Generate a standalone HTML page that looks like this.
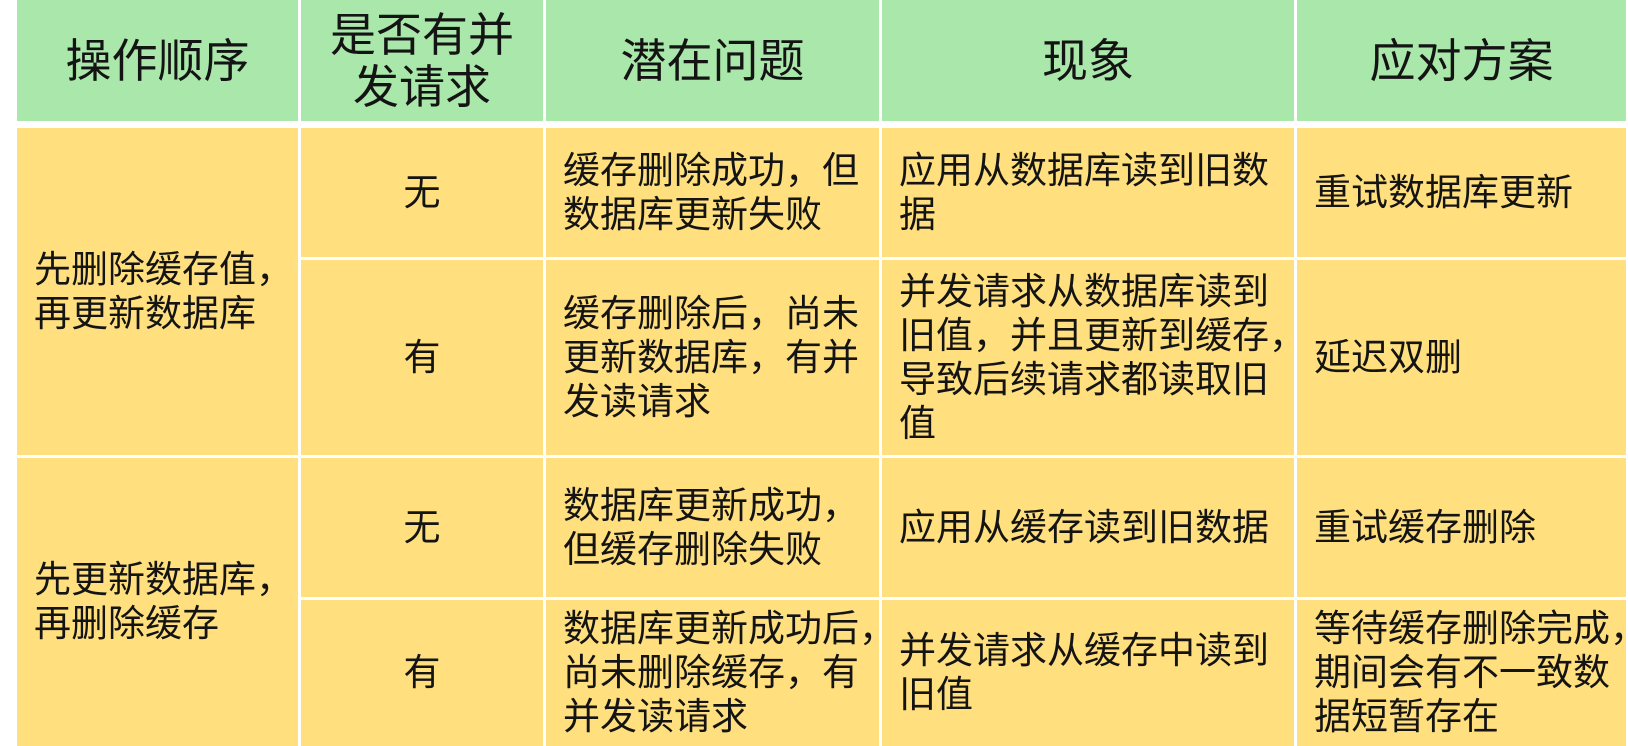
<!DOCTYPE html>
<html><head><meta charset="utf-8"><style>
html,body{margin:0;padding:0;background:#fff;width:1628px;height:746px;overflow:hidden}
.c{position:absolute;display:flex;align-items:center;box-sizing:border-box;font-family:"Liberation Sans","Noto Sans CJK SC",sans-serif;color:#141414;white-space:nowrap}
.h{background:#aae7aa;font-size:46px;line-height:52px;justify-content:center;text-align:center}
.b{background:#ffdf7e;font-size:37px;line-height:44px;padding-left:17px}
.ctr{justify-content:center;padding-left:0}
</style></head><body>
<div class="c h" style="left:17px;top:0;width:281px;height:121px">操作顺序</div>
<div class="c h" style="left:301px;top:0;width:242px;height:121px">是否有并<br>发请求</div>
<div class="c h" style="left:546px;top:0;width:333px;height:121px">潜在问题</div>
<div class="c h" style="left:882px;top:0;width:412px;height:121px">现象</div>
<div class="c h" style="left:1297px;top:0;width:329px;height:121px">应对方案</div>

<div class="c b" style="left:17px;top:128px;width:281px;height:327px">先删除缓存值，<br>再更新数据库</div>
<div class="c b" style="left:17px;top:458px;width:281px;height:288px">先更新数据库，<br>再删除缓存</div>

<div class="c b ctr" style="left:301px;top:128px;width:242px;height:129px">无</div>
<div class="c b ctr" style="left:301px;top:260px;width:242px;height:195px">有</div>
<div class="c b ctr" style="left:301px;top:458px;width:242px;height:139px">无</div>
<div class="c b ctr" style="left:301px;top:600px;width:242px;height:146px">有</div>

<div class="c b" style="left:546px;top:128px;width:333px;height:129px">缓存删除成功，但<br>数据库更新失败</div>
<div class="c b" style="left:546px;top:260px;width:333px;height:195px">缓存删除后，尚未<br>更新数据库，有并<br>发读请求</div>
<div class="c b" style="left:546px;top:458px;width:333px;height:139px">数据库更新成功，<br>但缓存删除失败</div>
<div class="c b" style="left:546px;top:600px;width:333px;height:146px">数据库更新成功后，<br>尚未删除缓存，有<br>并发读请求</div>

<div class="c b" style="left:882px;top:128px;width:412px;height:129px">应用从数据库读到旧数<br>据</div>
<div class="c b" style="left:882px;top:260px;width:412px;height:195px">并发请求从数据库读到<br>旧值，并且更新到缓存，<br>导致后续请求都读取旧<br>值</div>
<div class="c b" style="left:882px;top:458px;width:412px;height:139px">应用从缓存读到旧数据</div>
<div class="c b" style="left:882px;top:600px;width:412px;height:146px">并发请求从缓存中读到<br>旧值</div>

<div class="c b" style="left:1297px;top:128px;width:329px;height:129px">重试数据库更新</div>
<div class="c b" style="left:1297px;top:260px;width:329px;height:195px">延迟双删</div>
<div class="c b" style="left:1297px;top:458px;width:329px;height:139px">重试缓存删除</div>
<div class="c b" style="left:1297px;top:600px;width:329px;height:146px">等待缓存删除完成，<br>期间会有不一致数<br>据短暂存在</div>
</body></html>
